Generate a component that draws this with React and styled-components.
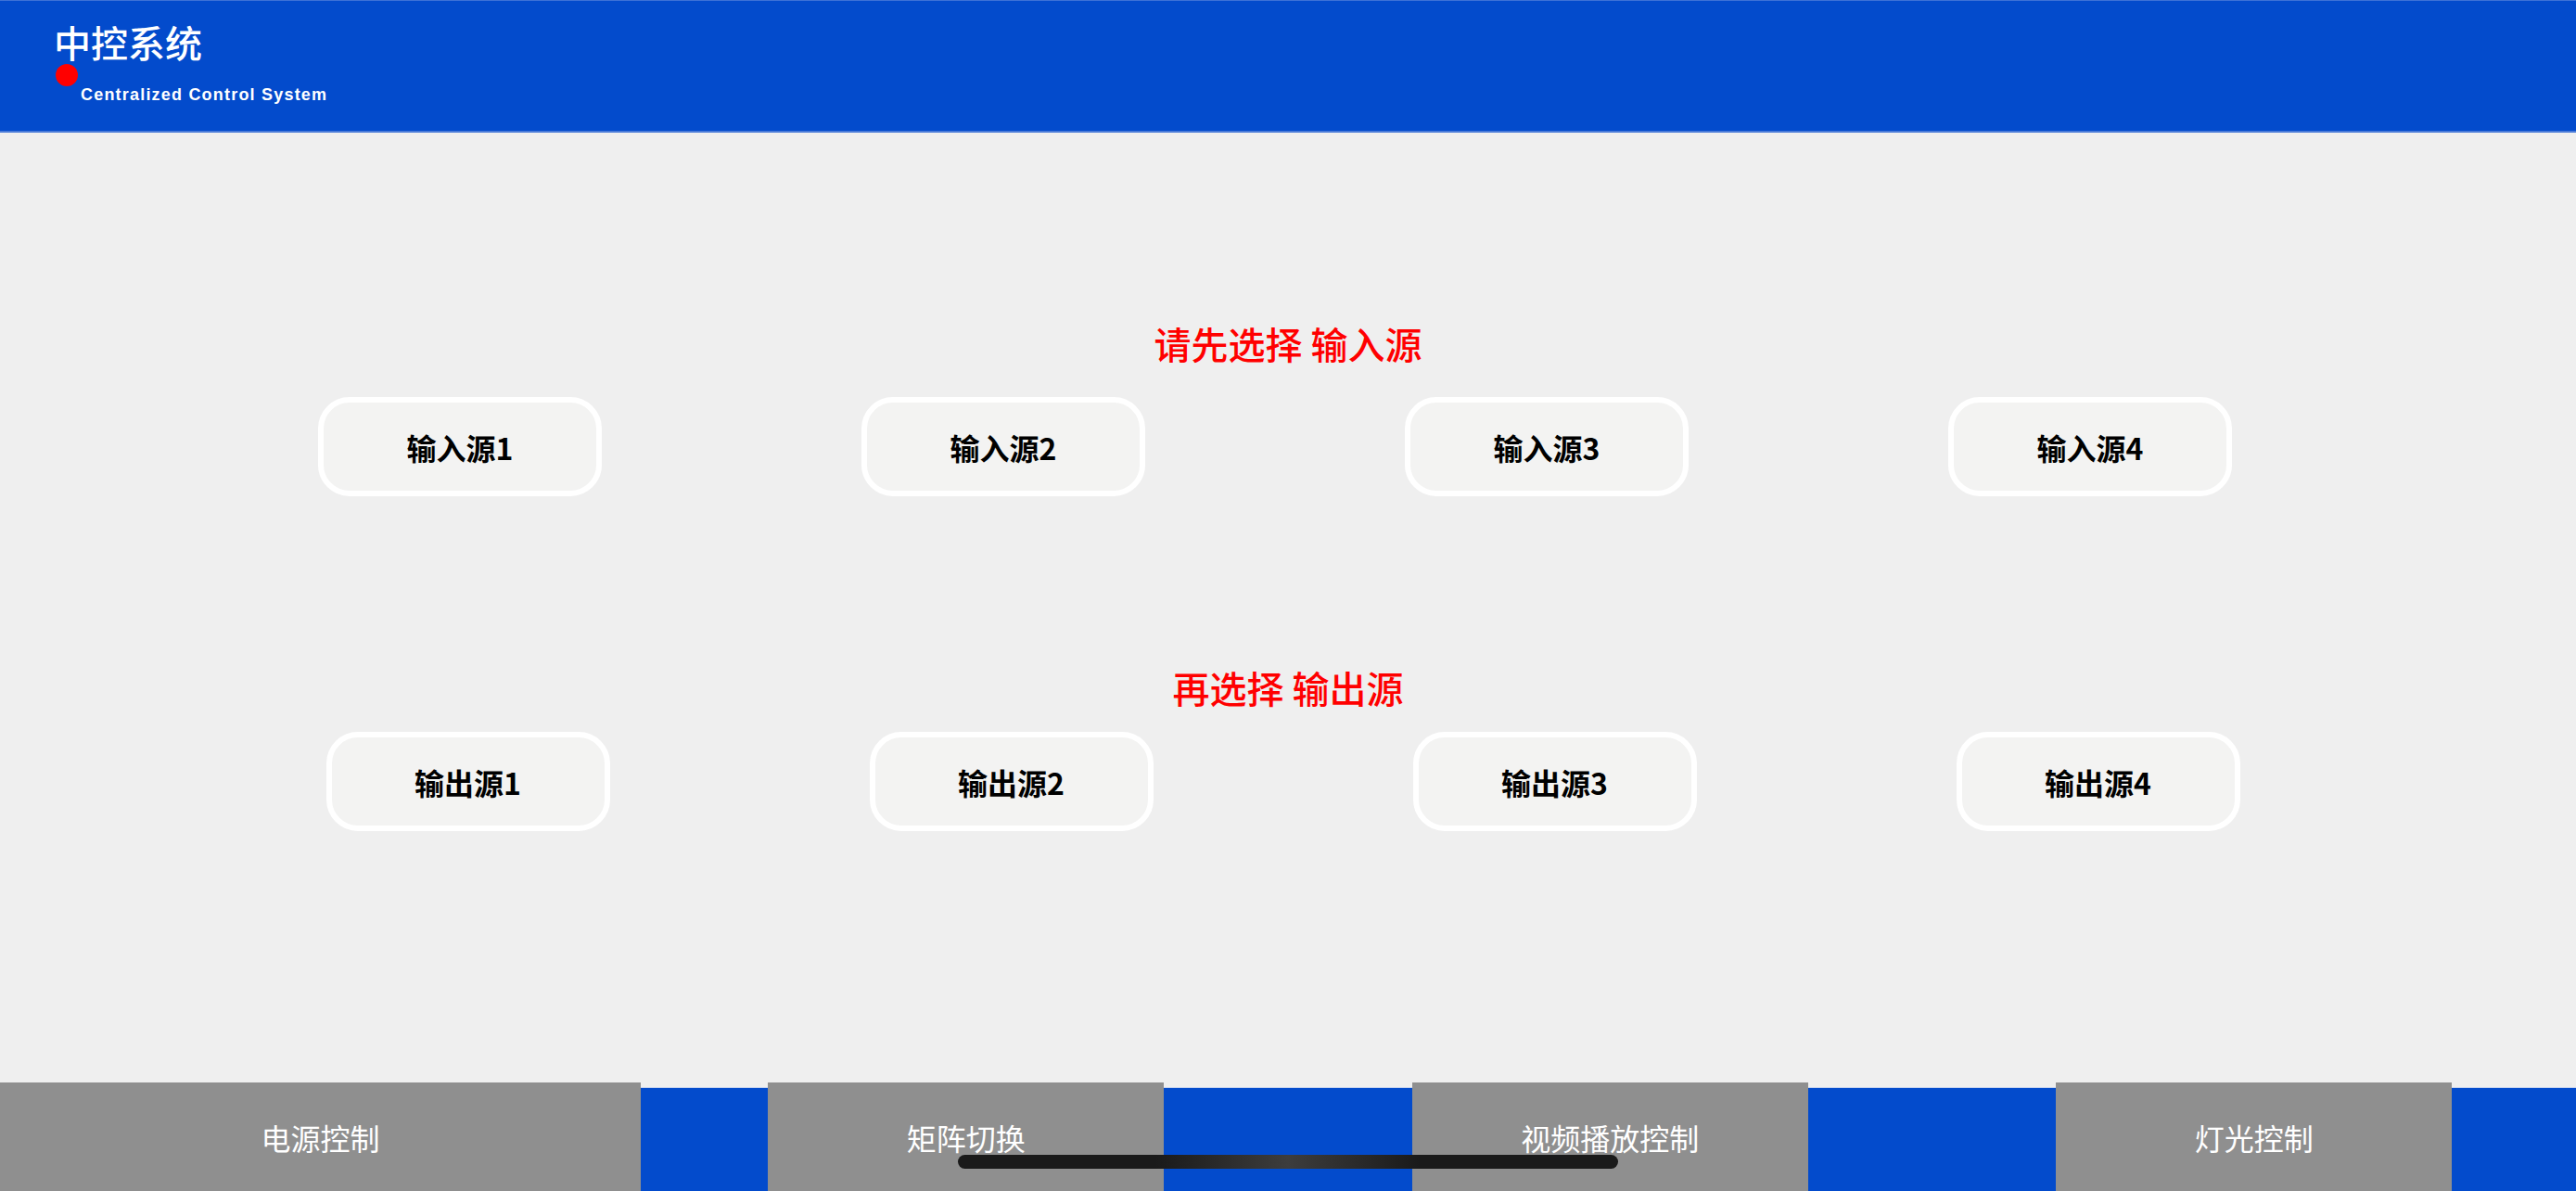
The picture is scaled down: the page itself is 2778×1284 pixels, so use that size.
import React from "react";
import styled, { createGlobalStyle } from "styled-components";

const CJK = `"Noto Sans CJK SC", "Noto Sans", sans-serif`;

const GlobalStyle = createGlobalStyle`
  html, body {
    margin: 0;
    padding: 0;
    background: #efefef;
  }
  #root {
    height: 100vh;
  }
`;

const inputs = ["输入源1", "输入源2", "输入源3", "输入源4"];
const outputs = ["输出源1", "输出源2", "输出源3", "输出源4"];
const tabs = [
  { label: "电源控制", wide: true },
  { label: "矩阵切换" },
  { label: "视频播放控制" },
  { label: "灯光控制" },
];

const App = () => {
  return (
    <Page>
      <GlobalStyle />
      {/* header */}
      <Header>
        <HeaderTitle>中控系统</HeaderTitle>
        <HeaderSub>Centralized Control System</HeaderSub>
        <StatusDot />
      </Header>

      {/* source selection */}
      <Main>
        <Prompt>请先选择 输入源</Prompt>
        <SourceRow $shift={28} $top={34}>
          {inputs.map((name) => (
            <SourceBtn key={name}>{name}</SourceBtn>
          ))}
        </SourceRow>
        <Prompt $top={182}>再选择 输出源</Prompt>
        <SourceRow $shift={11} $top={24}>
          {outputs.map((name) => (
            <SourceBtn key={name}>{name}</SourceBtn>
          ))}
        </SourceRow>
      </Main>

      {/* bottom tabs */}
      <TabBar>
        {tabs.map((t) => (
          <Tab key={t.label} $wide={t.wide}>
            {t.label}
          </Tab>
        ))}
      </TabBar>
      <HomeIndicator />
    </Page>
  );
};

const Page = styled.div`
  position: relative;
  height: 100%;
  display: flex;
  flex-direction: column;
  background: #efefef;
  overflow: hidden;
`;

const Header = styled.header`
  position: relative;
  box-sizing: border-box;
  height: 143px;
  padding: 20px 0 0 58px;
  background: #034bcc;
  border-top: 1px solid #3d72d6;
  border-bottom: 2px solid #4a7bd8;
  display: flex;
  flex-direction: column;
  align-items: flex-start;
`;

const HeaderTitle = styled.div`
  font-family: ${CJK};
  font-size: 40px;
  line-height: 48px;
  font-weight: 500;
  color: #fff;
`;

const HeaderSub = styled.div`
  margin: 22px 0 0 29px;
  font-family: "Liberation Sans", Arial, sans-serif;
  font-weight: 700;
  font-size: 18px;
  line-height: 22px;
  letter-spacing: 1.2px;
  color: #fff;
`;

const StatusDot = styled.span`
  position: absolute;
  left: 60px;
  top: 68px;
  width: 24px;
  height: 24px;
  border-radius: 50%;
  background: #ff0000;
`;

const Main = styled.main`
  flex: 1;
  display: flex;
  flex-direction: column;
  align-items: center;
  padding-top: 203px;
`;

const Prompt = styled.h2`
  margin: ${(p) => p.$top || 0}px 0 0;
  font-family: ${CJK};
  font-size: 40px;
  line-height: 48px;
  font-weight: 500;
  color: #ff0000;
`;

const SourceRow = styled.div`
  align-self: stretch;
  display: flex;
  justify-content: center;
  gap: 280px;
  margin-top: ${(p) => p.$top}px;
  padding-right: ${(p) => p.$shift}px;
`;

const SourceBtn = styled.button`
  box-sizing: border-box;
  width: 306px;
  height: 107px;
  border: 6px solid #ffffff;
  border-radius: 34px;
  background: #f3f3f2;
  font-family: ${CJK};
  font-size: 32px;
  font-weight: 700;
  color: #000;
  padding: 0;
  cursor: pointer;
`;

const TabBar = styled.nav`
  box-sizing: border-box;
  height: 112px;
  display: grid;
  grid-template-columns: repeat(4, 1fr);
  background: #034bcc;
  border-top: 1px solid #c4d2ee;
`;

const Tab = styled.div`
  justify-self: ${(p) => (p.$wide ? "start" : "center")};
  width: ${(p) => (p.$wide ? 691 : 427)}px;
  height: 117px;
  margin-top: -6px;
  display: flex;
  align-items: center;
  justify-content: center;
  background: #8f8f8f;
  font-family: ${CJK};
  font-size: 32px;
  color: #fff;
`;

const HomeIndicator = styled.div`
  position: absolute;
  left: 50%;
  bottom: 24px;
  width: 712px;
  height: 15px;
  margin-left: -356px;
  border-radius: 8px;
  background: linear-gradient(
    90deg,
    #1a1a1a 0%,
    #1a1a1a 30%,
    #3d3d3d 50%,
    #1a1a1a 70%,
    #1a1a1a 100%
  );
`;

export default App;
